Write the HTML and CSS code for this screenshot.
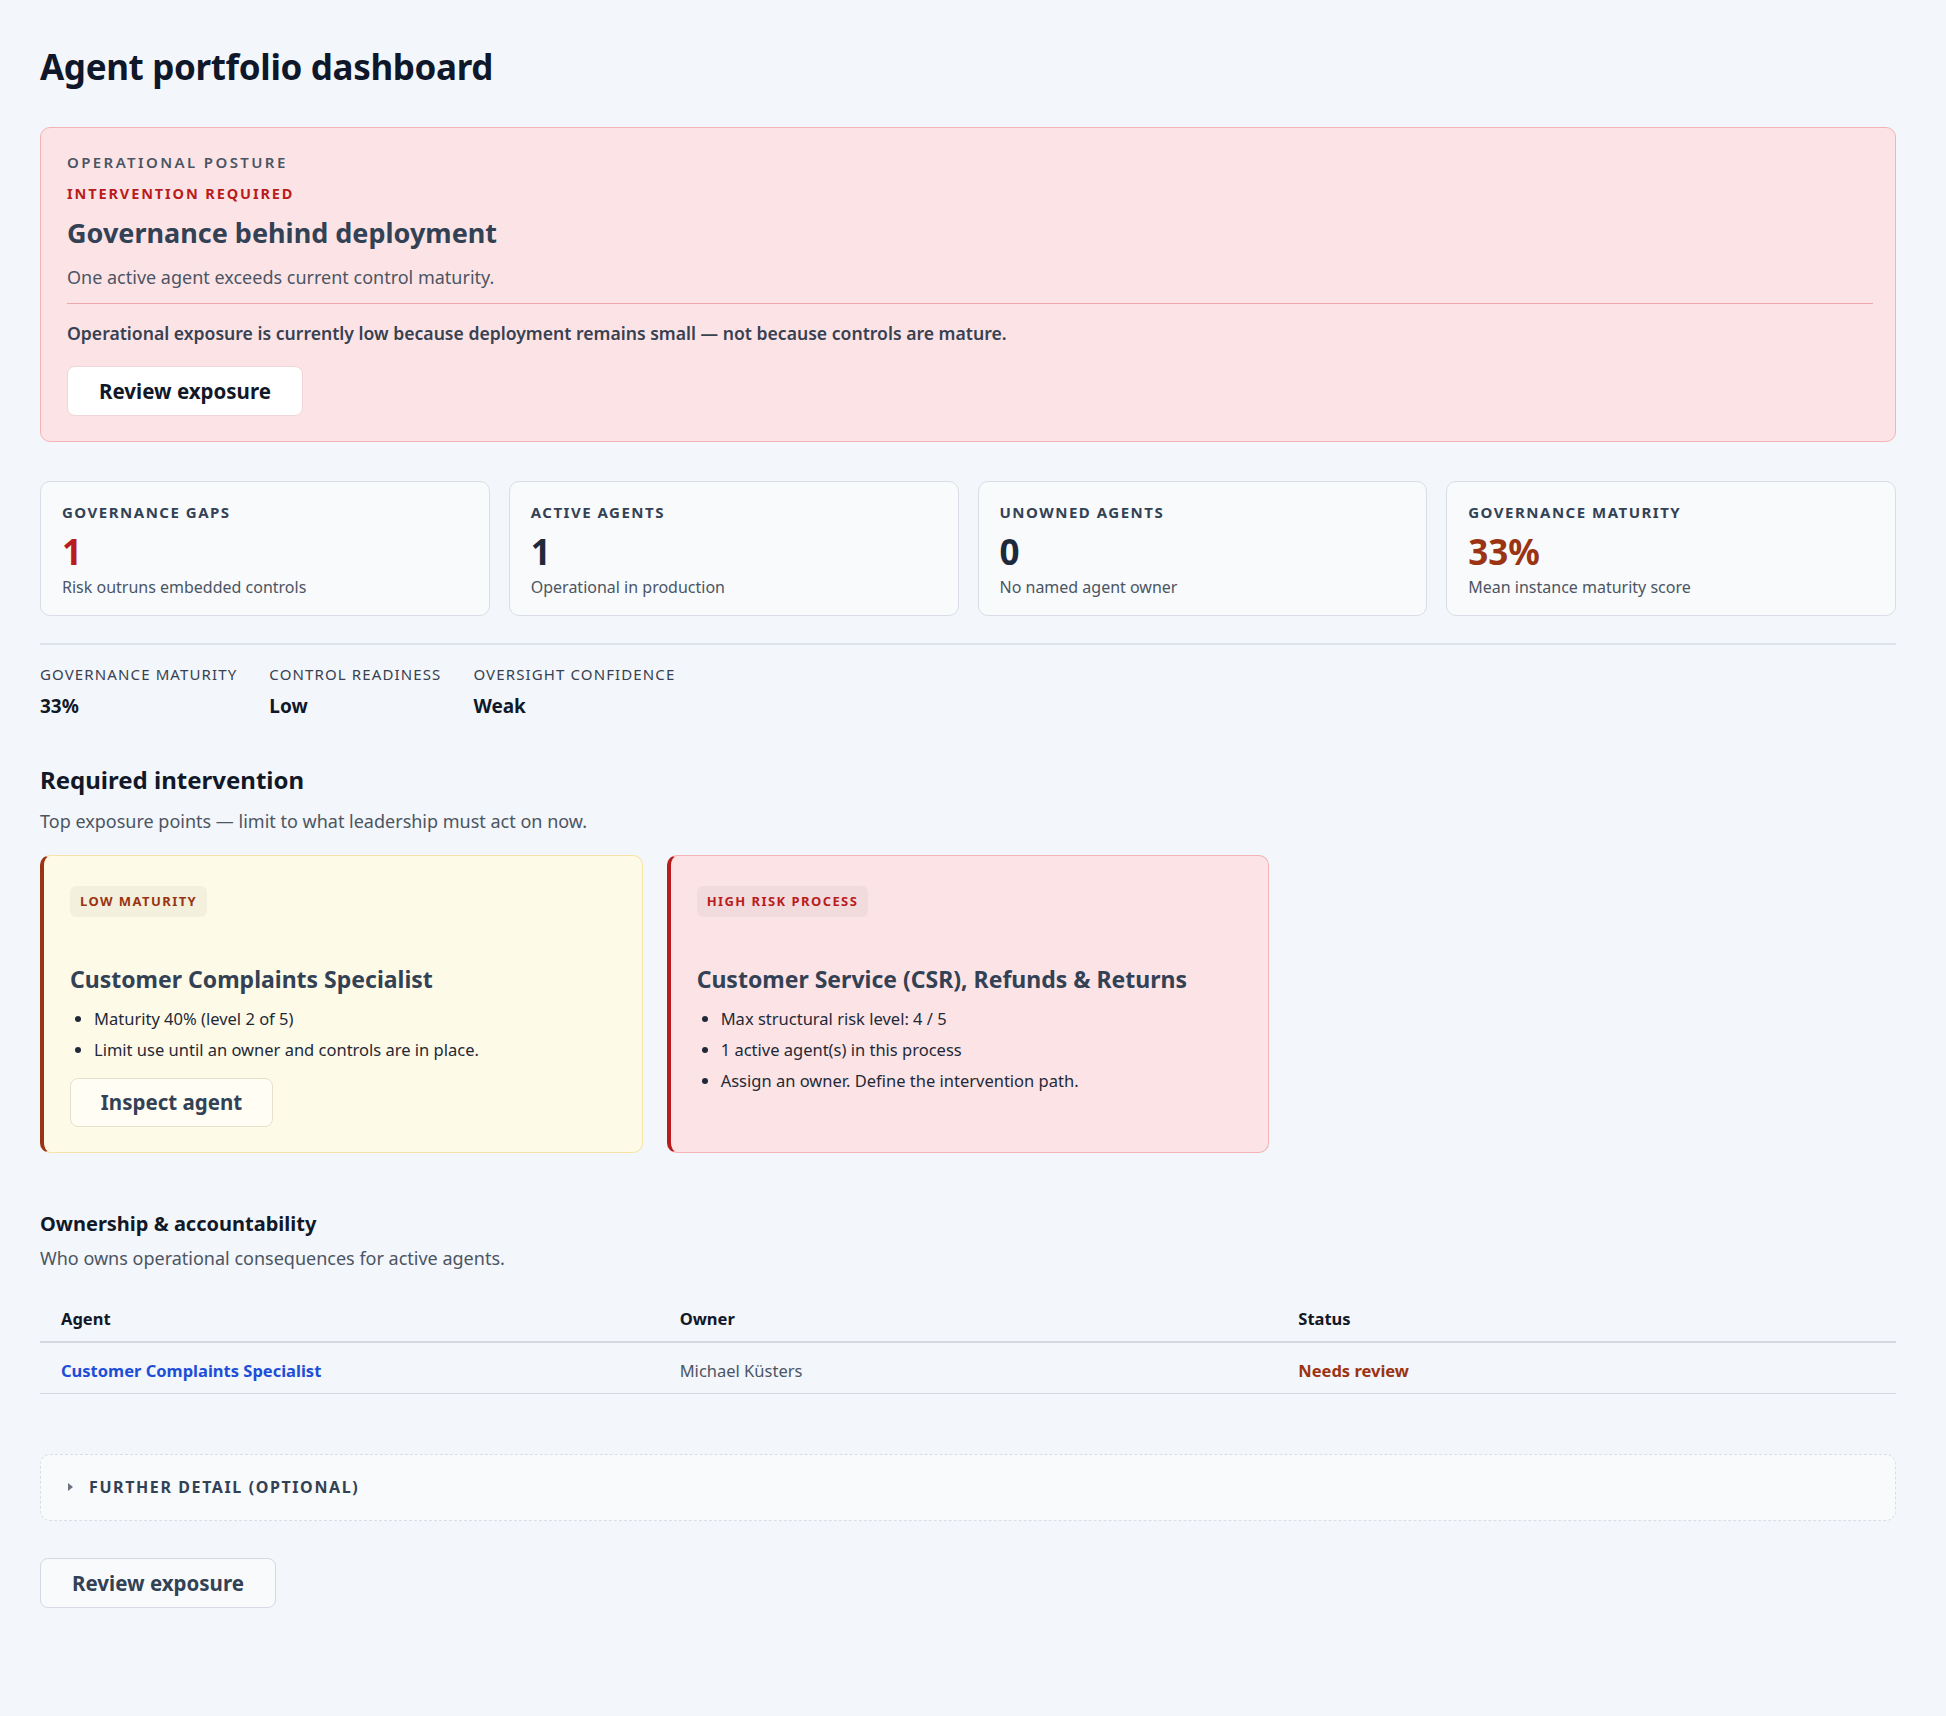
FILE: index.html
```html
<!DOCTYPE html>
<html lang="en">
<head>
    <meta charset="UTF-8">
    <meta name="viewport" content="width=device-width, initial-scale=1.0">
    <title>Agent portfolio dashboard</title>
    <link rel="stylesheet" href="styles.css">
</head>
<body>
    <main class="page">
        <h1 class="page-title">Agent portfolio dashboard</h1>

        <section class="posture">
            <div class="eyebrow">Operational posture</div>
            <div class="posture-state">Intervention required</div>
            <h2 class="posture-title">Governance behind deployment</h2>
            <p class="posture-summary">One active agent exceeds current control maturity.</p>
            <hr class="posture-rule">
            <p class="posture-note">Operational exposure is currently low because deployment remains small — not because controls are mature.</p>
            <button class="btn btn-white">Review exposure</button>
        </section>

        <section class="stats">
            <div class="stat">
                <div class="stat-label">Governance gaps</div>
                <div class="stat-value red">1</div>
                <div class="stat-sub">Risk outruns embedded controls</div>
            </div>
            <div class="stat">
                <div class="stat-label">Active agents</div>
                <div class="stat-value">1</div>
                <div class="stat-sub">Operational in production</div>
            </div>
            <div class="stat">
                <div class="stat-label">Unowned agents</div>
                <div class="stat-value">0</div>
                <div class="stat-sub">No named agent owner</div>
            </div>
            <div class="stat">
                <div class="stat-label">Governance maturity</div>
                <div class="stat-value brown">33%</div>
                <div class="stat-sub">Mean instance maturity score</div>
            </div>
        </section>

        <section class="metrics">
            <div class="metric">
                <div class="metric-label">Governance maturity</div>
                <div class="metric-value">33%</div>
            </div>
            <div class="metric">
                <div class="metric-label">Control readiness</div>
                <div class="metric-value">Low</div>
            </div>
            <div class="metric">
                <div class="metric-label">Oversight confidence</div>
                <div class="metric-value">Weak</div>
            </div>
        </section>

        <section class="intervention">
            <h2 class="section-title">Required intervention</h2>
            <p class="section-sub">Top exposure points — limit to what leadership must act on now.</p>

            <div class="cards">
                <article class="card card-amber">
                    <span class="badge">Low maturity</span>
                    <h3 class="card-title">Customer Complaints Specialist</h3>
                    <ul class="card-list">
                        <li>Maturity 40% (level 2 of 5)</li>
                        <li>Limit use until an owner and controls are in place.</li>
                    </ul>
                    <button class="btn btn-soft">Inspect agent</button>
                </article>
                <article class="card card-red">
                    <span class="badge">High risk process</span>
                    <h3 class="card-title">Customer Service (CSR), Refunds &amp; Returns</h3>
                    <ul class="card-list">
                        <li>Max structural risk level: 4 / 5</li>
                        <li>1 active agent(s) in this process</li>
                        <li>Assign an owner. Define the intervention path.</li>
                    </ul>
                </article>
            </div>
        </section>

        <section class="ownership">
            <h3 class="ownership-title">Ownership &amp; accountability</h3>
            <p class="ownership-sub">Who owns operational consequences for active agents.</p>
            <table class="owners">
                <thead>
                    <tr>
                        <th>Agent</th>
                        <th>Owner</th>
                        <th>Status</th>
                    </tr>
                </thead>
                <tbody>
                    <tr>
                        <td><a href="#" class="agent-link">Customer Complaints Specialist</a></td>
                        <td>Michael Küsters</td>
                        <td class="status-review">Needs review</td>
                    </tr>
                </tbody>
            </table>
        </section>

        <details class="further">
            <summary>Further detail (optional)</summary>
        </details>

        <button class="btn btn-plain">Review exposure</button>
    </main>
</body>
</html>
```

FILE: styles.css
```css
* {
    box-sizing: border-box;
}

body {
    margin: 0;
    background: #f3f6fa;
    color: #1f2937;
    font-family: "Noto Sans", "Open Sans", sans-serif;
}

.page {
    padding: 40px 50px 80px 40px;
}

.page-title {
    margin: 6px 0 39px;
    font-size: 35px;
    line-height: 42px;
    font-weight: 700;
    color: #0f172a;
    letter-spacing: -0.01em;
}

/* posture banner */
.posture {
    background: #fce4e6;
    border: 1px solid #f3b3b7;
    border-radius: 10px;
    padding: 24px 22px 25px 26px;
}

.eyebrow {
    font-size: 15px;
    font-weight: 600;
    letter-spacing: 0.16em;
    text-transform: uppercase;
    color: #4b5563;
    line-height: 20px;
}

.posture-state {
    margin-top: 11px;
    font-size: 14.5px;
    font-weight: 700;
    letter-spacing: 0.13em;
    text-transform: uppercase;
    color: #b91c1c;
    line-height: 20px;
}

.posture-title {
    margin: 12px 0 0;
    font-size: 27px;
    line-height: 36px;
    font-weight: 700;
    color: #334155;
}

.posture-summary {
    margin: 14px 0 0;
    font-size: 18px;
    line-height: 24px;
    color: #4b5563;
}

.posture-rule {
    border: 0;
    border-top: 1px solid #eba9ad;
    margin: 14px 0 17px;
}

.posture-note {
    margin: 0;
    font-size: 17.6px;
    line-height: 24px;
    font-weight: 600;
    color: #374151;
}

.btn {
    font-family: inherit;
    font-size: 20.5px;
    font-weight: 700;
    border-radius: 8px;
    cursor: pointer;
}

.btn-white {
    margin-top: 21px;
    width: 236px;
    height: 50px;
    background: #fff;
    border: 1px solid #f0d6d8;
    color: #111827;
}

/* stat cards */
.stats {
    display: grid;
    grid-template-columns: repeat(4, 1fr);
    gap: 19px;
    margin-top: 39px;
    padding-bottom: 27px;
    border-bottom: 2px solid #dde2e9;
}

.stat {
    background: #f8fafc;
    border: 1px solid #d9dee6;
    border-radius: 10px;
    padding: 20px 21px 14px;
    height: 135px;
}

.stat-label {
    font-size: 15px;
    font-weight: 700;
    letter-spacing: 0.1em;
    text-transform: uppercase;
    color: #334155;
    line-height: 20px;
}

.stat-value {
    font-size: 35px;
    line-height: 48px;
    font-weight: 700;
    color: #1e293b;
    margin-top: 6px;
}

.stat-value.red {
    color: #b91c1c;
}

.stat-value.brown {
    color: #9a3412;
}

.stat-sub {
    font-size: 16px;
    line-height: 22px;
    color: #4b5563;
}

/* metric strip */
.metrics {
    display: flex;
    gap: 32px;
    margin-top: 19px;
}

.metric-label {
    font-size: 15px;
    letter-spacing: 0.075em;
    text-transform: uppercase;
    color: #374151;
    line-height: 20px;
}

.metric-value {
    margin-top: 10px;
    font-size: 19px;
    font-weight: 700;
    color: #111827;
    line-height: 24px;
}

/* intervention */
.intervention {
    margin-top: 46px;
}

.section-title {
    margin: 0;
    font-size: 24px;
    line-height: 32px;
    font-weight: 700;
    color: #111827;
}

.section-sub {
    margin: 13px 0 0;
    font-size: 18px;
    line-height: 24px;
    color: #4b5563;
}

.cards {
    display: grid;
    grid-template-columns: repeat(3, 1fr);
    gap: 24px;
    margin-top: 22px;
}

.card {
    border-radius: 10px;
    border: 1px solid;
    border-left-width: 4px;
    padding: 29.5px 26px 25px;
    min-height: 297px;
}

.card-amber {
    background: #fefae8;
    border-color: #f6e3a6;
    border-left-color: #9a3412;
}

.card-red {
    background: #fce4e6;
    border-color: #f3b3b7;
    border-left-color: #b91c1c;
}

.badge {
    display: inline-block;
    padding: 5px 10px 6px;
    border-radius: 6px;
    background: rgba(0, 0, 0, 0.04);
    font-size: 13px;
    font-weight: 700;
    letter-spacing: 0.11em;
    text-transform: uppercase;
    line-height: 20px;
}

.card-amber .badge {
    color: #9a3412;
}

.card-red .badge {
    color: #b91c1c;
}

.card-title {
    margin: 46px 0 0;
    font-size: 23px;
    line-height: 32px;
    font-weight: 700;
    color: #334155;
}

.card-list {
    margin: 8px 0 0;
    padding-left: 24px;
    font-size: 16.5px;
    line-height: 31px;
    color: #1f2937;
}

.btn-soft {
    margin-top: 13px;
    width: 203px;
    height: 49px;
    background: rgba(255, 255, 255, 0.5);
    border: 1px solid #e6e1cc;
    color: #334155;
}

/* ownership */
.ownership {
    margin-top: 57px;
}

.ownership-title {
    margin: 0;
    font-size: 20px;
    line-height: 28px;
    font-weight: 700;
    color: #111827;
}

.ownership-sub {
    margin: 8px 0 0;
    font-size: 18px;
    line-height: 24px;
    color: #4b5563;
}

.owners {
    width: 100%;
    table-layout: fixed;
    border-collapse: collapse;
    margin-top: 25px;
    font-size: 16.5px;
}

.owners th {
    text-align: left;
    font-weight: 700;
    color: #111827;
    padding: 12px 21px 10px;
    border-bottom: 2px solid #d5d9df;
    line-height: 24px;
}

.owners td {
    padding: 16px 21px 10px;
    border-bottom: 1px solid #d5d9df;
    color: #4b5563;
    line-height: 24px;
}

.agent-link {
    color: #1d4ed8;
    font-weight: 700;
    text-decoration: none;
}

.owners .status-review {
    font-weight: 700;
    color: #9a3412;
}

/* further detail */
.further {
    margin-top: 60px;
    background: #f8fafc;
    border: 1px dashed #d9dee6;
    border-radius: 10px;
    padding: 20px 26px 21px;
}

.further summary {
    list-style: none;
    cursor: pointer;
    font-size: 16px;
    font-weight: 700;
    letter-spacing: 0.1em;
    text-transform: uppercase;
    color: #334155;
    line-height: 24px;
}

.further summary::-webkit-details-marker {
    display: none;
}

.further summary::before {
    content: "";
    display: inline-block;
    vertical-align: 2px;
    margin: 0 16px 0 1px;
    border-left: 5px solid #6b7280;
    border-top: 4px solid transparent;
    border-bottom: 4px solid transparent;
}

.btn-plain {
    margin-top: 37px;
    width: 236px;
    height: 50px;
    background: #f8fafc;
    border: 1px solid #d5dae2;
    color: #334155;
}
```
